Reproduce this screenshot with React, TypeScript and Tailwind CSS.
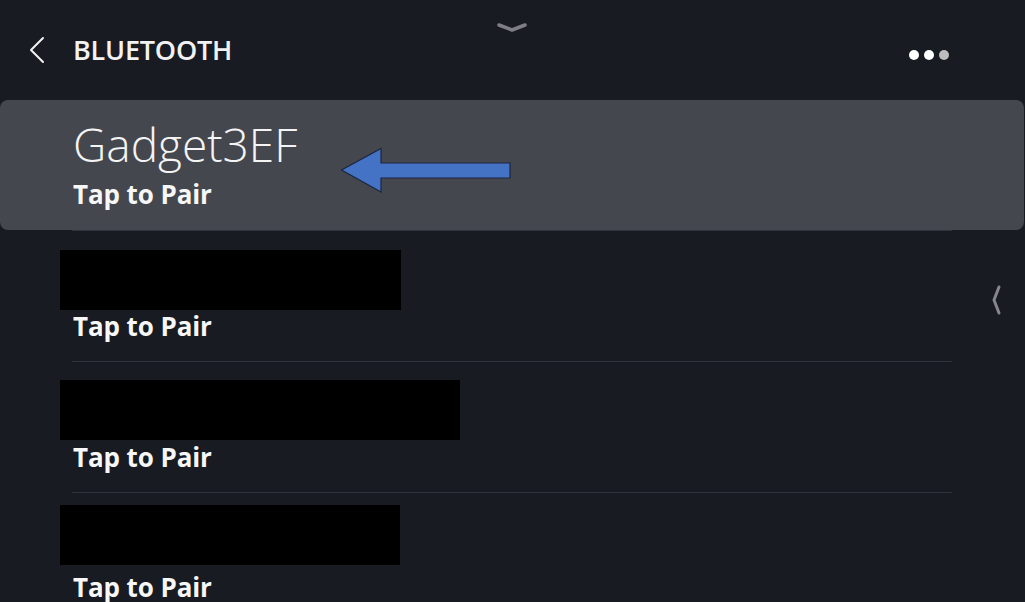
import React from "react";

const devices = [
  { redact: 341, boxTop: "mt-[19px]", textTop: "mt-[3px]" },
  { redact: 400, boxTop: "mt-[18px]", textTop: "mt-[4px]" },
  { redact: 340, boxTop: "mt-[12px]", textTop: "mt-[9px]" },
];

function Separator() {
  return <div className="ml-[72px] mr-[73px] h-px shrink-0 bg-[#2e323a]" />;
}

function PairLabel({ className = "" }: { className?: string }) {
  return (
    <div className={`text-[26px] leading-[26px] font-bold tracking-[-0.1px] text-[#f7f7f7] ${className}`}>
      Tap to Pair
    </div>
  );
}

export default function App() {
  return (
    <div
      className="relative flex flex-col w-[1025px] h-[602px] overflow-hidden bg-[#181b22] text-white"
      style={{ fontFamily: '"Open Sans", "Noto Sans", sans-serif' }}
    >
      {/* pull-down handle */}
      <svg className="absolute left-[496px] top-[21px]" width="32" height="14" viewBox="0 0 32 14">
        <path d="M3 4 L16 9 L29 4" fill="none" stroke="#7d7f84" strokeWidth="3.5" strokeLinecap="round" strokeLinejoin="round" />
      </svg>

      {/* side handle */}
      <svg className="absolute left-[989px] top-[284px]" width="14" height="32" viewBox="0 0 14 32">
        <path d="M10 3 L5 16 L10 29" fill="none" stroke="#85878c" strokeWidth="3" strokeLinecap="round" strokeLinejoin="round" />
      </svg>

      {/* header */}
      <div className="flex shrink-0 items-center h-[100px] pl-[28px] pr-[76px]">
        <svg width="18" height="28" viewBox="0 0 18 28" className="mr-[27px]">
          <path d="M15 2 L3 14 L15 26" fill="none" stroke="#f2f2f2" strokeWidth="2" strokeLinecap="round" strokeLinejoin="round" />
        </svg>
        <span className="text-[27px] font-semibold tracking-[-0.2px] text-[#f2f2f2]">BLUETOOTH</span>
        <div className="ml-auto flex items-center gap-[5px] mt-[10px]">
          <span className="w-[10px] h-[10px] rounded-full bg-white" />
          <span className="w-[10px] h-[10px] rounded-full bg-white" />
          <span className="w-[10px] h-[10px] rounded-full bg-[#bdbdbf]" />
        </div>
      </div>

      {/* selected device */}
      <div className="relative shrink-0 mr-[1px] h-[130px] rounded-[8px] bg-[#45474f] pl-[73px] pt-[21px]">
        <div className="text-[46px] leading-[46px] font-light text-[#f4f4f4]">Gadget3EF</div>
        <PairLabel className="mt-[14px]" />
        <svg className="absolute left-[338px] top-[45px]" width="176" height="50" viewBox="0 0 176 50">
          <path d="M3.5 25 L43 3.5 L43 18 L172 18 L172 33 L43 33 L43 47 Z" fill="#4472c4" stroke="#1c2640" strokeWidth="1.2" strokeLinejoin="miter" />
        </svg>
      </div>
      <Separator />

      {devices.map((d, i) => (
        <React.Fragment key={i}>
          <div className="flex flex-col shrink-0 h-[130px]">
            <div className={`${d.boxTop} ml-[60px] h-[60px] bg-black`} style={{ width: d.redact }} />
            <PairLabel className={`${d.textTop} ml-[73px]`} />
          </div>
          {i < devices.length - 1 && <Separator />}
        </React.Fragment>
      ))}
    </div>
  );
}
